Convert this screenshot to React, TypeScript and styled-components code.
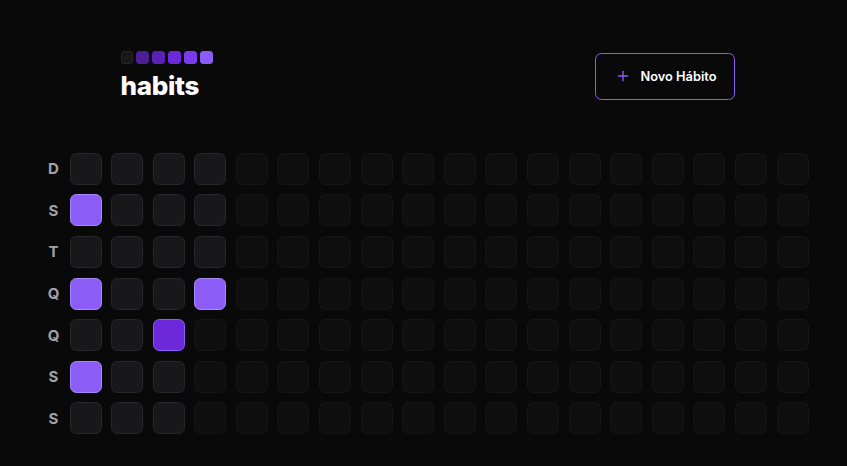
import styled, { createGlobalStyle } from "styled-components";
import { Plus } from "lucide-react";

const GlobalStyle = createGlobalStyle`
  * { box-sizing: border-box; }
  body {
    margin: 0;
    background: #09090a;
    color: #fff;
    font-family: Inter, "Noto Sans", sans-serif;
  }
`;

const Page = styled.div`
  width: 772px;
  margin: 0 auto;
  padding-top: 51px;
  display: flex;
  flex-direction: column;
  gap: 51px;
`;

const Header = styled.header`
  display: flex;
  justify-content: space-between;
  align-items: center;
  padding: 0 75px 0 83px;
`;

const Logo = styled.div`
  display: flex;
  flex-direction: column;
  gap: 6px;
`;

const Blocks = styled.div`
  display: flex;
  gap: 3.2px;
`;

const Block = styled.span<{ $bg: string; $border?: string }>`
  width: 12.8px;
  height: 12.8px;
  border-radius: 3px;
  background: ${p => p.$bg};
  border: 1px solid ${p => p.$border ?? p.$bg};
`;

const Title = styled.h1`
  margin: 0;
  font-size: 26px;
  line-height: 32px;
  font-weight: 800;
  letter-spacing: -0.3px;
`;

const NewButton = styled.button`
  width: 140px;
  height: 47px;
  display: flex;
  align-items: center;
  gap: 10px;
  padding: 0 0 0 19px;
  background: transparent;
  border: 1px solid #8b5cf6;
  border-radius: 6.4px;
  color: #fff;
  font-family: Inter, sans-serif;
  font-weight: 600;
  font-size: 12.8px;
  svg { color: #8b5cf6; }
`;

const Board = styled.div`
  display: flex;
`;

const WeekDays = styled.div`
  display: grid;
  grid-template-rows: repeat(7, 32px);
  row-gap: 9.6px;
`;

const WeekDay = styled.div`
  width: 32px;
  height: 32px;
  display: flex;
  align-items: center;
  justify-content: center;
  color: #a1a1aa;
  font-weight: 700;
  font-size: 15px;
`;

const Summary = styled.div`
  display: grid;
  grid-template-rows: repeat(7, 32px);
  grid-auto-flow: column;
  grid-auto-columns: 32px;
  gap: 9.6px;
`;

type Level = "past" | "done" | "partial" | "future";

const cellColors: Record<Level, [string, string]> = {
  past: ["#18181b", "#27272a"],
  done: ["#8b5cf6", "#a78bfa"],
  partial: ["#6d28d9", "#8b5cf6"],
  future: ["#0f0f10", "#151516"],
};

const Cell = styled.div<{ $level: Level }>`
  width: 32px;
  height: 32px;
  border-radius: 6.4px;
  background: ${p => cellColors[p.$level][0]};
  border: 1.6px solid ${p => cellColors[p.$level][1]};
`;

const weekDays = ["D", "S", "T", "Q", "Q", "S", "S"];

const marks: Record<string, Level> = {
  "0-1": "done",
  "0-3": "done",
  "0-5": "done",
  "2-4": "partial",
  "3-3": "done",
};

const cells: Level[] = Array.from({ length: 18 * 7 }, (_, i) => {
  const col = Math.floor(i / 7);
  const row = i % 7;
  if (col > 3 || (col === 3 && row > 3)) return "future";
  return marks[`${col}-${row}`] ?? "past";
});

const logoBlocks: [string, string?][] = [
  ["#18181b", "#27272a"],
  ["#4c1d95"],
  ["#5b21b6"],
  ["#6d28d9"],
  ["#7c3aed"],
  ["#8b5cf6"],
];

export default function App() {
  return (
    <>
      <GlobalStyle />
      <Page>
        <Header>
          <Logo>
            <Blocks>
              {logoBlocks.map(([bg, border], i) => (
                <Block key={i} $bg={bg} $border={border} />
              ))}
            </Blocks>
            <Title>habits</Title>
          </Logo>
          <NewButton>
            <Plus size={16} />
            Novo Hábito
          </NewButton>
        </Header>
        <Board>
          <WeekDays>
            {weekDays.map((d, i) => (
              <WeekDay key={i}>{d}</WeekDay>
            ))}
          </WeekDays>
          <Summary>
            {cells.map((level, i) => (
              <Cell key={i} $level={level} />
            ))}
          </Summary>
        </Board>
      </Page>
    </>
  );
}
